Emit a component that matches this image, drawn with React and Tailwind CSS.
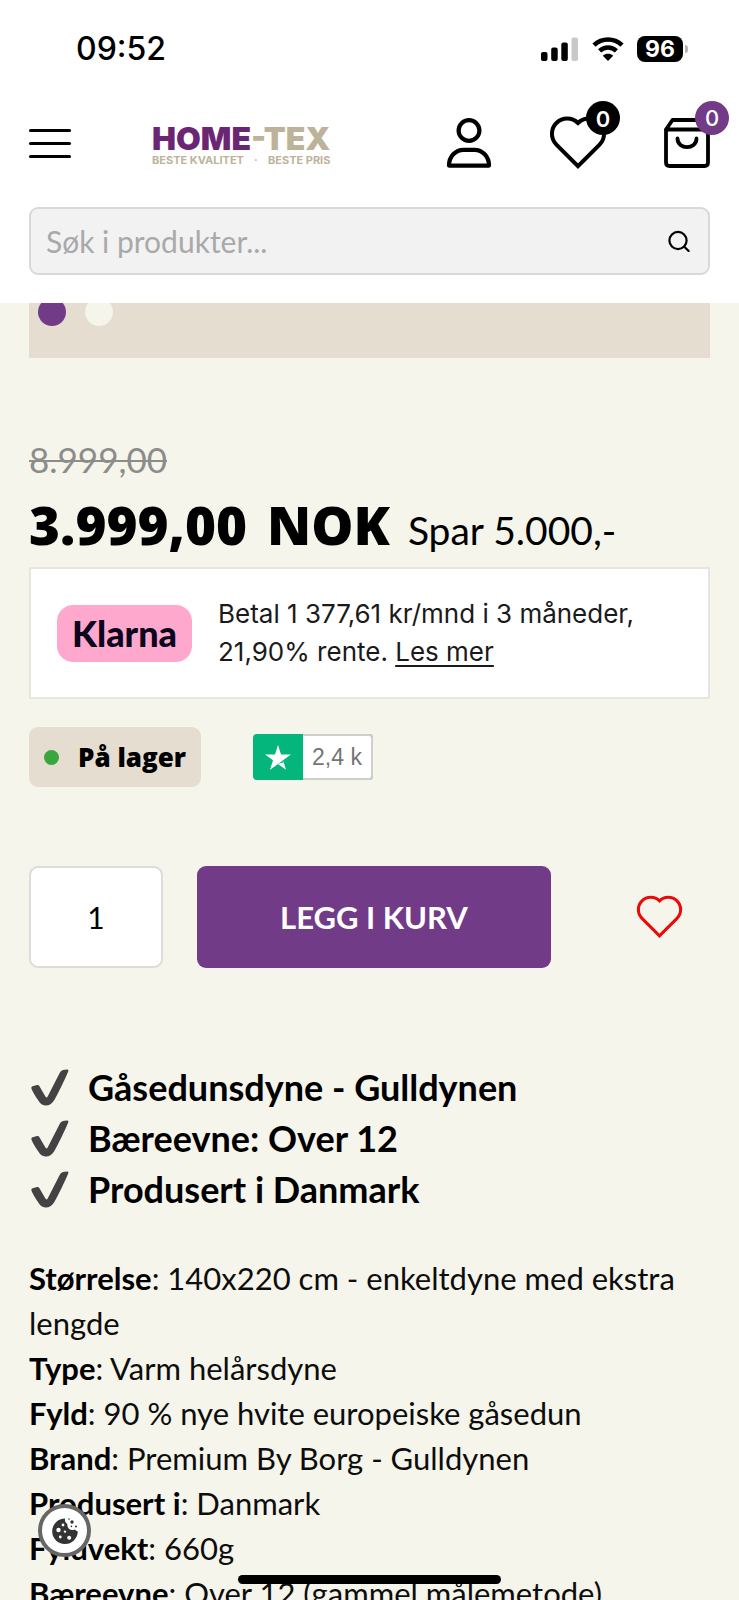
import React from "react";

const HEART = "M0 0A15.25 15.25 0 0 0 -21.6 21.6L0 43.2L21.6 21.6A15.25 15.25 0 0 0 0 0Z";

function Heart({ className, strokeWidth }) {
  return (
    <svg viewBox="-29 -7 58 54" className={className} fill="none" stroke="currentColor" strokeWidth={strokeWidth} strokeLinejoin="miter" aria-hidden="true">
      <path d={HEART} />
    </svg>
  );
}

function StatusBar() {
  return (
    <div className="flex h-[98px] items-center justify-between pr-[51px] pl-[76px] font-['Inter',sans-serif]">
      <span className="text-[32px] leading-10 font-medium text-black">09:52</span>
      <div className="flex items-center gap-[13px]">
        <svg viewBox="0 0 38 26" className="h-[26px] w-[38px]" aria-hidden="true">
          <rect x="0" y="16" width="6.5" height="9" rx="2" />
          <rect x="10.2" y="11.5" width="6.5" height="13.5" rx="2" />
          <rect x="20.3" y="6.5" width="6.5" height="18.5" rx="2" />
          <rect x="30.5" y="1.5" width="6.5" height="23.5" rx="2" fill="#c9c9c9" />
        </svg>
        <svg viewBox="0 0 32 26" className="h-[26px] w-8" fill="none" stroke="#000" strokeWidth="4.6" aria-hidden="true">
          <path d="M2 9.2C10 1.6 22 1.6 30 9.2" />
          <path d="M7.6 14.9C12.6 10.4 19.4 10.4 24.4 14.9" />
          <path d="M10.8 19.8C13.8 17.2 18.2 17.2 21.2 19.8L16 25Z" fill="#000" stroke="none" />
        </svg>
        <div className="flex items-center gap-[2px]">
          <span className="flex h-[26px] w-[46px] items-center justify-center rounded-lg bg-black text-[23px] leading-none font-bold text-white">96</span>
          <span className="h-2 w-[3px] rounded-r-full bg-[#b5b5b5]" />
        </div>
      </div>
    </div>
  );
}

function Header() {
  return (
    <header className="bg-white">
      <StatusBar />
      <div className="px-[29px] pb-7">
        <div className="flex items-center justify-between pt-[18px]">
          <div className="flex items-center gap-[81px]">
            <button type="button" aria-label="Meny" className="flex w-[42px] flex-col gap-[10px]">
              <span className="h-[3px] rounded-full bg-black" />
              <span className="h-[3px] rounded-full bg-black" />
              <span className="h-[3px] rounded-full bg-black" />
            </button>
            <a href="#" className="flex flex-col items-start pt-1">
              <span className="font-['Inter',sans-serif] text-[32px] leading-7 font-black text-[#6b2673]">
                HOME<span className="text-[#bdb39a]">-TEX</span>
              </span>
              <span className="flex justify-between self-stretch pt-px font-['Inter',sans-serif] text-[11px] leading-3 font-bold text-[#bdb39a]">
                <span>BESTE KVALITET</span>
                <span>·</span>
                <span>BESTE PRIS</span>
              </span>
            </a>
          </div>
          <div className="flex items-center gap-[57px]">
            <button type="button" aria-label="Min konto">
              <svg viewBox="0 0 46 50" className="h-[50px] w-[46px]" fill="none" stroke="#000" strokeWidth="4.2" strokeLinejoin="round" aria-hidden="true">
                <circle cx="23" cy="12.5" r="10.4" />
                <path d="M3 47.6C3 38.5 9.5 31.8 17.5 31.8H28.5C36.5 31.8 43 38.5 43 47.6Z" />
              </svg>
            </button>
            <button type="button" aria-label="Favoritter" className="relative">
              <Heart className="h-[54px] w-[58px]" strokeWidth="4" />
              <span className="absolute -top-[15px] left-[37px] flex size-[34px] items-center justify-center rounded-full bg-black pt-[2px] font-['Inter',sans-serif] text-[22px] leading-none font-semibold text-white">0</span>
            </button>
            <button type="button" aria-label="Handlekurv" className="relative">
              <svg viewBox="0 0 46 50" className="h-[50px] w-[46px]" fill="none" stroke="#000" strokeWidth="3.8" strokeLinejoin="round" strokeLinecap="round" aria-hidden="true">
                <path d="M2 11.5V44.5Q2 48 5.5 48H40.5Q44 48 44 44.5V11.5L38.5 2H8.5L2 11.5H44" />
                <path d="M13.5 20.5C13.5 32 32.5 32 32.5 20.5" />
              </svg>
              <span className="absolute -top-[17px] left-[31px] flex size-[34px] items-center justify-center rounded-full bg-[#723b87] font-['Inter',sans-serif] text-[22px] leading-none font-medium text-white">0</span>
            </button>
          </div>
        </div>
        <form className="mt-[37px] flex h-[68px] items-center rounded-[9px] border-2 border-[#d9d9d9] bg-[#f2f2f2] pr-[18px] pl-[15px]">
          <input
            type="search"
            aria-label="Søk i produkter"
            placeholder="Søk i produkter..."
            className="min-w-0 flex-1 bg-transparent text-[30px] leading-10 text-black outline-none placeholder:text-[#a9a9a9]"
          />
          <button type="button" aria-label="Søk">
            <svg viewBox="0 0 22 22" className="size-[22px]" fill="none" stroke="#000" strokeWidth="2.2" strokeLinecap="round" aria-hidden="true">
              <circle cx="10" cy="10.5" r="8.6" />
              <path d="M16.3 16.8L20.6 21" />
            </svg>
          </button>
        </form>
      </div>
    </header>
  );
}

function KlarnaBox() {
  return (
    <div className="mt-[7px] flex items-center gap-[26px] border-2 border-[#e6e5de] bg-white px-[26px] py-[26px]">
      <span className="flex h-[57px] w-[135px] shrink-0 items-center justify-center rounded-2xl bg-[#ffa8cd] font-['Lato',sans-serif] text-[36px] leading-none font-black text-[#0b051d]">
        Klarna
      </span>
      <p className="font-['Inter',sans-serif] text-[26px] leading-[38px] text-[#1a1a1a]">
        Betal 1 377,61 kr/mnd i 3 måneder,
        <br />
        21,90% rente.{" "}
        <a href="#" className="underline decoration-2 underline-offset-4">Les mer</a>
      </p>
    </div>
  );
}

const usps = ["Gåsedunsdyne - Gulldynen", "Bæreevne: Over 12", "Produsert i Danmark"];

const specs = [
  ["Størrelse", "140x220 cm - enkeltdyne med ekstra lengde"],
  ["Type", "Varm helårsdyne"],
  ["Fyld", "90 % nye hvite europeiske gåsedun"],
  ["Brand", "Premium By Borg - Gulldynen"],
  ["Produsert i", "Danmark"],
  ["Fyldvekt", "660g"],
  ["Bæreevne", "Over 12 (gammel målemetode)"],
];

export default function App() {
  return (
    <div className="h-screen overflow-hidden bg-[#f5f5eb] font-['Lato',sans-serif] text-black">
      <Header />
      <main className="px-[29px]">
        <div className="flex h-[55px] items-start gap-[19px] overflow-hidden bg-[#e5ddd0] px-[9px]">
          <button type="button" aria-label="Bilde 1" className="-mt-[5px] size-7 rounded-full bg-[#723b87]" />
          <button type="button" aria-label="Bilde 2" className="-mt-[5px] size-7 rounded-full bg-[#f5f5eb]" />
        </div>

        <div className="mt-[81px] text-[35px] leading-10 text-[#8c8c8a]">
          <s className="decoration-2">8.999,00</s>
        </div>
        <div className="mt-4 flex items-baseline gap-[18px] leading-[60px]">
          <span className="flex gap-5 font-['Open_Sans',sans-serif] text-[53px] font-extrabold">
            <span>3.999,00</span>
            <span>NOK</span>
          </span>
          <span className="text-[39px]">Spar 5.000,-</span>
        </div>
        <KlarnaBox />

        <div className="mt-7 flex items-center gap-[52px]">
          <span className="flex h-[60px] items-center gap-[19px] rounded-[9px] bg-[#e5ddd0] px-[15px] font-['Open_Sans',sans-serif] text-[26px] leading-none font-extrabold">
            <span className="size-[15px] rounded-full bg-[#3aa63f]" />
            På lager
          </span>
          <a href="#" className="flex h-[46px] rounded-[4px] bg-[#04b67c] font-['Liberation_Sans',Arial,sans-serif]">
            <span className="flex w-[50px] items-center justify-center">
              <svg viewBox="0 0 26 25" className="h-[25px] w-[26px]" aria-hidden="true">
                <path d="M13 0L16 9.4H26L18 15.3L21 24.8L13 19L5 24.8L8 15.3L0 9.4H10Z" fill="#fff" />
                <path d="M13 19L18.6 17.3L18 15.3Z" fill="#04b67c" />
              </svg>
            </span>
            <span className="flex items-center rounded-r-[4px] border-2 border-l-0 border-[#cfcfcb] bg-white px-[9px] text-[23px] leading-none text-[#757575]">2,4 k</span>
          </a>
        </div>

        <div className="mt-[79px] flex items-center">
          <input
            type="text"
            inputMode="numeric"
            aria-label="Antall"
            defaultValue="1"
            className="h-[102px] w-[134px] rounded-[9px] border-2 border-[#dcdcdc] bg-white text-center text-[30px]"
          />
          <button type="button" className="ml-[34px] h-[102px] w-[354px] rounded-[9px] bg-[#723b87] text-[31px] font-bold text-white">
            LEGG I KURV
          </button>
          <div className="flex flex-1 justify-center pl-[58px]">
            <button type="button" aria-label="Legg til i favoritter" className="text-[#ea0a0a]">
              <Heart className="h-[44px] w-[47px]" strokeWidth="3.8" />
            </button>
          </div>
        </div>

        <ul className="mt-[94px] text-[36px] leading-[51px] font-bold">
          {usps.map((usp) => (
            <li key={usp} className="flex items-center gap-[19px]">
              <svg viewBox="0 0 40 40" className="size-10" aria-hidden="true">
                <path d="M2.4 20.4Q1.9 18.8 3.6 18.2L8 17Q9.6 16.7 10.3 18L16.4 28.6Q17.6 30.4 18.8 28.2L30.4 5.4Q32.2 2 35.6 1.8L38.4 1.6Q39.9 1.7 39.3 3.2C35.6 12 29.6 24.6 25.2 32.2C23 36 19.8 37.8 16.4 37.6C13 37.4 11 35.2 9 32C6.4 28 4 24.4 2.4 20.4Z" fill="#444243" />
              </svg>
              {usp}
            </li>
          ))}
        </ul>

        <div className="mt-[41px] text-[31px] leading-[45px] text-[#0d0d0d]">
          {specs.map(([label, value]) => (
            <p key={label}>
              <strong className="font-bold text-black">{label}</strong>: {value}
            </p>
          ))}
        </div>
      </main>

      <button type="button" aria-label="Informasjonskapsler" className="fixed bottom-[43px] left-[38px] flex size-[53px] items-center justify-center rounded-full border-4 border-[#666666] bg-white">
        <svg viewBox="0 0 28 28" className="size-7" aria-hidden="true">
          <path d="M14 1.5A12.8 12.8 0 1 0 26.8 14.6Q24.6 13.8 23.8 12.6Q20.5 14 17.6 11.6Q15.6 9.6 16.4 7Q13.4 5 14 1.5Z" fill="#333" />
          <g fill="#fff">
            <circle cx="7.5" cy="13" r="2.2" />
            <circle cx="12" cy="8" r="1.4" />
            <circle cx="14" cy="14.6" r="1.2" />
            <circle cx="9.3" cy="20" r="1.4" />
            <circle cx="18.2" cy="20.8" r="2" />
          </g>
          <g fill="#333">
            <circle cx="21" cy="5" r="1.7" />
            <circle cx="25" cy="9.6" r="1" />
            <circle cx="20.4" cy="9.4" r="0.8" />
            <circle cx="18" cy="2" r="0.8" />
          </g>
        </svg>
      </button>
      <div className="fixed inset-x-0 bottom-4 flex justify-center">
        <span className="h-[9px] w-[263px] rounded-full bg-black" />
      </div>
    </div>
  );
}
